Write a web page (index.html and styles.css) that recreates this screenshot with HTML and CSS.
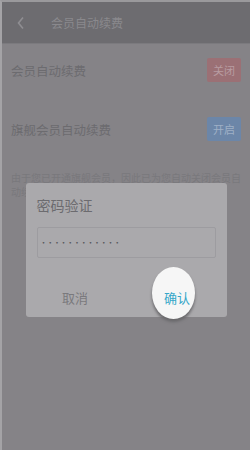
FILE: index.html
```html
<html>
<head>
  <meta charset="utf-8">
  <title>会员自动续费</title>
  <link rel="stylesheet" href="styles.css">
</head>
<body>
  <div class="page">
    <div class="header">
      <svg class="back" width="10" height="14" viewBox="0 0 10 14">
        <path d="M7 1.5 L2.5 7 L7 12.5" fill="none" stroke="#8f8e92" stroke-width="1.6"/>
      </svg>
      <span class="title">会员自动续费</span>
    </div>
    <div class="row">
      <span class="label">会员自动续费</span>
      <span class="btn btn-off">关闭</span>
    </div>
    <div class="row">
      <span class="label">旗舰会员自动续费</span>
      <span class="btn btn-on">开启</span>
    </div>
    <p class="note">由于您已开通旗舰会员，因此已为您自动关闭会员自动续费，开通旗舰续费。</p>
  </div>

  <div class="mask">
    <div class="dialog">
      <div class="dialog-title">密码验证</div>
      <div class="pwd">••••••••••••</div>
      <div class="actions">
        <span class="action cancel">取消</span>
        <span class="action ok">确认</span>
      </div>
    </div>
  </div>
</body>
</html>
```

FILE: styles.css
```css
/* page de fond, deja assombrie par le masque */
body {
  margin: 0;
  width: 250px;
  height: 450px;
  overflow: hidden;
  background: #858387;
  font-family: "Noto Sans CJK SC", "Noto Sans", sans-serif;
  position: relative;
}
.page {
  height: 450px;
  border-left: 2px solid #a4a3a6;
  border-top: 2px solid #9a999c;
  box-sizing: border-box;
}
.header {
  height: 41px;
  background: #6d6c70;
  border-bottom: 1px solid #7b7a7e;
  display: flex;
  align-items: center;
  padding-left: 14px;
}
.back {
  margin-right: 25px;
}
.title {
  font-size: 12px;
  color: #8a898d;
}
.row {
  display: flex;
  justify-content: space-between;
  align-items: center;
  height: 24px;
  padding: 0 9px 0 9px;
  margin-top: 14px;
}
.row + .row {
  margin-top: 35px;
}
.label {
  font-size: 12.5px;
  color: #6c6b6f;
}
.btn {
  width: 34px;
  height: 24px;
  line-height: 24px;
  text-align: center;
  font-size: 11px;
  border-radius: 2px;
}
.btn-off {
  background: #9b7075;
  color: #b89ca1;
}
.btn-on {
  background: #6c86a8;
  color: #9fb0c6;
}
.note {
  margin: 30px 9px 0 9px;
  font-size: 10px;
  line-height: 14px;
  color: #79787c;
}
/* boite de dialogue */
.mask {
  position: absolute;
  top: 0;
  left: 0;
  right: 0;
  bottom: 0;
  display: flex;
  justify-content: center;
  align-items: flex-start;
  padding-top: 183px;
  box-sizing: border-box;
}
.dialog {
  width: 201px;
  height: 134px;
  margin-left: 2px;
  background: #aaa9ac;
  border-radius: 3px;
  padding: 0 11px;
  box-sizing: border-box;
}
.dialog-title {
  font-size: 14px;
  color: #6c6b6f;
  margin-top: 12px;
  line-height: 20px;
}
.pwd {
  margin-top: 12px;
  height: 31px;
  border: 1px solid #9d9ca0;
  border-radius: 2px;
  box-sizing: border-box;
  padding-left: 2px;
  font-size: 8px;
  letter-spacing: -1.3px;
  line-height: 29px;
  color: #58575b;
}
.actions {
  display: flex;
  margin-top: 30px;
  position: relative;
  z-index: 0;
}
.action {
  flex: 1;
  text-align: center;
  font-size: 13px;
  line-height: 20px;
  position: relative;
}
.cancel {
  color: #7a797d;
  padding-right: 23px;
}
.ok {
  color: #36a7c9;
  padding-left: 2px;
}
/* cercle blanc de mise en avant */
.ok::before {
  content: "";
  position: absolute;
  left: 15px;
  top: -21px;
  width: 43px;
  height: 52px;
  border-radius: 50%;
  background: #f6f6f6;
  box-shadow: 0 3px 3px #6a696c;
  z-index: -1;
}
```
